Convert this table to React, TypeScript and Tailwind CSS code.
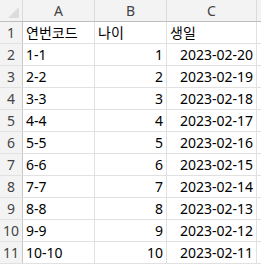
const rows: [string, number, string][] = [
  ["1-1", 1, "2023-02-20"],
  ["2-2", 2, "2023-02-19"],
  ["3-3", 3, "2023-02-18"],
  ["4-4", 4, "2023-02-17"],
  ["5-5", 5, "2023-02-16"],
  ["6-6", 6, "2023-02-15"],
  ["7-7", 7, "2023-02-14"],
  ["8-8", 8, "2023-02-13"],
  ["9-9", 9, "2023-02-12"],
  ["10-10", 10, "2023-02-11"],
];

const font = { fontFamily: '"Noto Sans", "Noto Sans CJK KR", sans-serif' };

function RowHead({ children }: { children: React.ReactNode }) {
  return (
    <div className="flex w-[23px] shrink-0 items-center justify-center border-r border-[#c6c6c6] bg-[#f3f3f3] text-[#444]">
      {children}
    </div>
  );
}

export default function App() {
  return (
    <div className="h-[266px] w-[261px] overflow-hidden bg-white text-[14px] leading-none text-black" style={font}>
      <div className="flex h-[22px] border-b border-[#bdbdbd] bg-[#f3f3f3] text-[#444]">
        <div className="relative w-[23px] shrink-0 border-r border-[#dadada]">
          <svg className="absolute bottom-[3px] right-[3px]" width="11" height="11" viewBox="0 0 11 11">
            <polygon points="11,0 11,11 0,11" fill="#dcdcdc" />
          </svg>
        </div>
        <div className="flex w-[72px] items-center justify-center border-r border-[#dadada]">A</div>
        <div className="flex w-[72px] items-center justify-center border-r border-[#dadada]">B</div>
        <div className="flex w-[90px] items-center justify-center border-r border-[#dadada]">C</div>
      </div>
      <div className="flex h-[22px] border-b border-[#e1e1e1]">
        <RowHead>1</RowHead>
        <div className="flex w-[72px] items-center border-r border-[#e1e1e1] pl-[3px]">연번코드</div>
        <div className="flex w-[72px] items-center border-r border-[#e1e1e1] pl-[3px]">나이</div>
        <div className="flex w-[90px] items-center border-r border-[#e1e1e1] pl-[3px]">생일</div>
      </div>
      {rows.map(([code, age, date], i) => (
        <div key={i} className="flex h-[22px] border-b border-[#e1e1e1]">
          <RowHead>{i + 2}</RowHead>
          <div className="flex w-[72px] items-center border-r border-[#e1e1e1] pl-[3px]">{code}</div>
          <div className="flex w-[72px] items-center justify-end border-r border-[#e1e1e1] pr-[3px]">{age}</div>
          <div className="flex w-[90px] items-center justify-end border-r border-[#e1e1e1] pr-[3px]">{date}</div>
        </div>
      ))}
    </div>
  );
}
